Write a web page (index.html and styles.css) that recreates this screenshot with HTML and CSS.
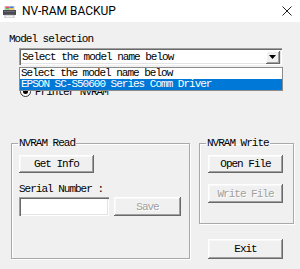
FILE: index.html
```html
<!DOCTYPE html>
<html>
<head>
<meta charset="utf-8">
<link rel="stylesheet" href="styles.css">
</head>
<body>
<div class="window">
  <div class="titlebar">
    <svg class="app-icon" width="13" height="12" viewBox="0 0 13 12">
      <rect x="2" y="0" width="9" height="4" fill="#fff" stroke="#999" stroke-width="0.6"/>
      <rect x="2.5" y="0.5" width="4" height="1.5" fill="#e8506a"/>
      <rect x="6.5" y="0.5" width="4" height="1.5" fill="#3d7fd6"/>
      <rect x="2.5" y="2" width="4" height="1.5" fill="#5cb85c"/>
      <rect x="6.5" y="2" width="4" height="1.5" fill="#f0c040"/>
      <rect x="0" y="4" width="13" height="5" fill="#4a4a52"/>
      <rect x="1" y="5" width="11" height="1" fill="#6c6c76"/>
      <rect x="2" y="9" width="9" height="3" fill="#f4f4f4" stroke="#999" stroke-width="0.6"/>
    </svg>
    <span class="title">NV-RAM BACKUP</span>
    <svg class="close" width="10" height="10" viewBox="0 0 10 10">
      <path d="M0.5 0.5 L9.5 9.5 M9.5 0.5 L0.5 9.5" stroke="#222" stroke-width="1" fill="none"/>
    </svg>
  </div>
  <div class="client">
    <div class="label model-label">Model selection</div>
    <div class="combo-wrap">
      <div class="combo">
        <span class="combo-text">Select the model name below</span>
        <span class="combo-btn">
          <svg width="7" height="4" viewBox="0 0 7 4"><path d="M0 0 H7 L3.5 4 Z" fill="#000"/></svg>
        </span>
      </div>
      <ul class="droplist">
        <li class="item">Select the model name below</li>
        <li class="item selected">EPSON SC-S50600 Series Comm Driver</li>
      </ul>
    </div>
    <div class="radio-row">
      <span class="radio"><span class="radio-dot"></span></span>
      <span class="label">Printer NVRAM</span>
    </div>
    <div class="groups">
      <fieldset class="group group-read">
        <legend class="legend">NVRAM Read</legend>
        <div class="group-body read-body">
          <button class="btn btn-getinfo">Get Info</button>
          <div class="label serial-label">Serial Number :</div>
          <div class="serial-row">
            <div class="field"></div>
            <button class="btn btn-save disabled">Save</button>
          </div>
        </div>
      </fieldset>
      <div class="write-col">
        <fieldset class="group group-write">
          <legend class="legend">NVRAM Write</legend>
          <div class="group-body write-body">
            <button class="btn btn-wide">Open File</button>
            <button class="btn btn-wide btn-writefile disabled">Write File</button>
          </div>
        </fieldset>
        <button class="btn btn-wide btn-exit">Exit</button>
      </div>
    </div>
  </div>
</div>
</body>
</html>
```
FILE: styles.css
```css
html, body {
  margin: 0;
  padding: 0;
  background: #f0f0f0;
}
.window {
  width: 300px;
  height: 269px;
  overflow: hidden;
  background: #f0f0f0;
  font-family: "Liberation Mono", "DejaVu Sans Mono", monospace;
  font-size: 11px;
  letter-spacing: -1px;
  line-height: 12px;
  color: #000;
}
.titlebar {
  height: 22px;
  background: #fff;
  display: flex;
  align-items: center;
  padding-left: 3px;
  box-sizing: border-box;
}
.app-icon {
  display: block;
  margin-top: 1px;
}
.title {
  font-family: Roboto, "Liberation Sans", sans-serif;
  font-size: 12px;
  letter-spacing: 0;
  margin-left: 6px;
  color: #000;
}
.close {
  display: block;
  margin-left: auto;
  margin-right: 8px;
}
.client {
  padding-left: 9px;
}
.label {
  white-space: nowrap;
}
.model-label {
  padding-top: 11px;
}
.combo-wrap {
  position: relative;
  margin-top: 3px;
  margin-left: 10px;
  width: 263px;
}
.combo {
  height: 17px;
  background: #fff;
  box-shadow: inset 1px 1px 0 #a0a0a0, inset 2px 2px 0 #696969, inset -1px -1px 0 #fff, inset -2px -2px 0 #e3e3e3;
  display: flex;
  align-items: center;
  padding: 0 2px 0 3px;
  box-sizing: border-box;
}
.combo-text {
  white-space: nowrap;
  flex: 1;
  padding-top: 1px;
}
.combo-btn {
  width: 14px;
  height: 13px;
  background: #f0f0f0;
  box-shadow: inset -1px -1px 0 #696969, inset 1px 1px 0 #fff, inset -2px -2px 0 #a0a0a0;
  display: flex;
  align-items: center;
  justify-content: center;
  margin-top: 1px;
}
.combo-btn svg {
  display: block;
  margin-left: -1px;
}
.droplist {
  position: absolute;
  left: 0;
  top: 19px;
  width: 264px;
  margin: 0;
  padding: 0;
  list-style: none;
  background: #fff;
  border: 1px solid #8c8c8c;
  box-sizing: border-box;
  z-index: 2;
}
.item {
  height: 11px;
  line-height: 11px;
  padding-left: 1px;
  white-space: nowrap;
}
.item.selected {
  background: #0078d7;
  color: #fff;
}
.radio-row {
  margin-top: 20px;
  margin-left: 11px;
  height: 13px;
  display: flex;
  align-items: center;
  gap: 4px;
}
.radio {
  width: 11px;
  height: 11px;
  border-radius: 50%;
  background: #fff;
  border: 1px solid #333;
  box-sizing: border-box;
  display: flex;
  align-items: center;
  justify-content: center;
}
.radio-dot {
  width: 5px;
  height: 5px;
  border-radius: 50%;
  background: #000;
}
.groups {
  display: flex;
  align-items: flex-start;
  gap: 9px;
  margin-top: 39px;
  margin-left: 2px;
}
.group {
  margin: 0;
  padding: 0;
  border: 1px solid #a9a9a9;
  box-shadow: inset 1px 1px 0 #fff, 1px 1px 0 #fff;
  min-width: 0;
}
.legend {
  margin-left: 6px;
  padding: 0 1px;
  height: 12px;
  line-height: 12px;
  white-space: nowrap;
}
.group-read {
  width: 179px;
  height: 122px;
  box-sizing: border-box;
}
.group-write {
  width: 95px;
  height: 87px;
  box-sizing: border-box;
}
.group-body {
  display: flex;
  flex-direction: column;
  align-items: flex-start;
}
.read-body {
  padding: 6px 0 0 7px;
}
.write-body {
  padding: 6px 0 0 8px;
}
.btn {
  font: inherit;
  letter-spacing: inherit;
  color: #000;
  background: #f0f0f0;
  border: none;
  margin: 0;
  padding: 0;
  box-shadow: inset -1px -1px 0 #696969, inset 1px 1px 0 #fff, inset -2px -2px 0 #a0a0a0, inset 2px 2px 0 #f8f8f8;
  display: flex;
  align-items: center;
  justify-content: center;
  line-height: 12px;
}
.btn.disabled {
  color: #a0a0a0;
  text-shadow: 1px 1px 0 #fff;
}
.btn-getinfo {
  width: 75px;
  height: 18px;
}
.serial-label {
  margin-top: 10px;
}
.serial-row {
  margin-top: 2px;
  display: flex;
  gap: 5px;
}
.field {
  width: 90px;
  height: 19px;
  background: #fff;
  box-shadow: inset 1px 1px 0 #a0a0a0, inset 2px 2px 0 #696969, inset -1px -1px 0 #fff, inset -2px -2px 0 #e3e3e3;
}
.btn-save {
  width: 67px;
  height: 19px;
}
.write-col {
  display: flex;
  flex-direction: column;
  align-items: flex-start;
}
.btn-wide {
  width: 75px;
  height: 18px;
}
.btn-writefile {
  margin-top: 11px;
  height: 19px;
}
.btn-exit {
  margin-top: 15px;
  margin-left: 9px;
  height: 20px;
}
```
